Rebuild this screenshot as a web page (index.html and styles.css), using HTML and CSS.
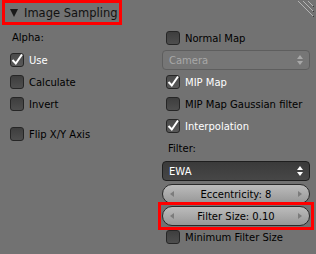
FILE: index.html
```html
<!DOCTYPE html>
<html lang="en">
<head>
	<meta charset="UTF-8">
	<meta name="viewport" content="width=device-width, initial-scale=1.0">
	<title>Image Sampling</title>
	<link rel="stylesheet" href="styles.css">
</head>
<body>
	<div class="panel">
		<div class="panel_head">
			<span class="panel_title"><span class="tri"></span>Image Sampling</span>
			<svg class="grip" width="20" height="20" viewBox="0 0 20 20">
				<path d="M4 0 L19 15 M9 0 L19 10 M14 0 L19 5" stroke="#3a3a3a" stroke-width="1" fill="none" transform="translate(1 1)"/>
				<path d="M4 0 L19 15 M9 0 L19 10 M14 0 L19 5" stroke="#b4b4b4" stroke-width="1" fill="none"/>
			</svg>
		</div>

		<div class="cols">
			<div class="col">
				<div class="label">Alpha:</div>
				<div class="opt on"><span class="box"><svg width="12" height="12" viewBox="0 0 12 12"><path d="M1.5 6 L4.8 9.5 L11 0.5" stroke="#fff" stroke-width="2" fill="none"/></svg></span>Use</div>
				<div class="opt"><span class="box"></span>Calculate</div>
				<div class="opt"><span class="box"></span>Invert</div>
				<div class="opt spaced"><span class="box"></span>Flip X/Y Axis</div>
			</div>

			<div class="col">
				<div class="opt"><span class="box"></span>Normal Map</div>
				<div class="menu off">Camera<span class="updown"></span></div>
				<div class="opt on"><span class="box"><svg width="12" height="12" viewBox="0 0 12 12"><path d="M1.5 6 L4.8 9.5 L11 0.5" stroke="#fff" stroke-width="2" fill="none"/></svg></span>MIP Map</div>
				<div class="opt"><span class="box"></span>MIP Map Gaussian filter</div>
				<div class="opt on"><span class="box"><svg width="12" height="12" viewBox="0 0 12 12"><path d="M1.5 6 L4.8 9.5 L11 0.5" stroke="#fff" stroke-width="2" fill="none"/></svg></span>Interpolation</div>
				<div class="label filter_label">Filter:</div>
				<div class="menu">EWA<span class="updown"></span></div>
				<div class="num"><span class="arr l"></span>Eccentricity: 8<span class="arr r"></span></div>
				<div class="mark">
					<div class="num"><span class="arr l"></span>Filter Size: 0.10<span class="arr r"></span></div>
				</div>
				<div class="opt"><span class="box"></span>Minimum Filter Size</div>
			</div>
		</div>
	</div>
</body>
</html>
```

FILE: styles.css
```css
body {
	margin: 0;
	background: #727272;
	font-family: "DejaVu Sans", sans-serif;
	font-size: 10px;
	color: #000;
}
.panel {
	width: 316px;
	height: 254px;
}
.panel_head {
	height: 27px;
	display: flex;
	justify-content: space-between;
	align-items: flex-start;
}
.panel_title {
	box-sizing: border-box;
	margin-left: 2px;
	width: 120px;
	height: 25px;
	border: 3px solid #f00;
	padding-left: 5px;
	display: flex;
	align-items: center;
	font-size: 11.5px;
	color: #111;
}
.tri {
	width: 0;
	height: 0;
	border-left: 4.5px solid transparent;
	border-right: 4.5px solid transparent;
	border-top: 8px solid #1a1a1a;
	margin-right: 6px;
	margin-top: 1px;
}
.grip {
	margin-top: 1px;
	margin-right: 2px;
}
.cols {
	display: flex;
	padding-left: 6px;
	gap: 4px;
}
.col {
	display: flex;
	flex-direction: column;
}
.col:first-child {
	width: 152px;
}
.col:last-child {
	width: 148px;
}
.label {
	height: 22px;
	line-height: 22px;
	padding-left: 6px;
}
.filter_label {
	height: 18px;
	line-height: 18px;
	margin-top: 3px;
	margin-bottom: 2px;
}
.opt {
	height: 22px;
	display: flex;
	align-items: center;
	padding-left: 4px;
	color: #000;
}
.opt.on {
	color: #fff;
}
.opt.spaced {
	margin-top: 8px;
}
.box {
	box-sizing: border-box;
	width: 14px;
	height: 14px;
	margin-right: 5px;
	border: 1px solid #262626;
	border-radius: 3px;
	background: linear-gradient(#3e3e3e, #4e4e4e);
	display: flex;
	align-items: center;
	justify-content: center;
}
.opt.on .box {
	background: linear-gradient(#4a4a4a, #585858);
}
.menu {
	box-sizing: border-box;
	height: 20px;
	margin: 1px 0 1px;
	padding-left: 6px;
	border: 1px solid #1e1e1e;
	border-radius: 4px;
	background: linear-gradient(#3a3a3a, #474747);
	color: #fff;
	display: flex;
	align-items: center;
	position: relative;
}
.menu.off {
	border-color: #5e5e5e;
	background: #767676;
	color: #a8a8a8;
}
.updown {
	position: absolute;
	right: 6px;
	top: 4px;
	width: 0;
	height: 0;
	border-left: 3px solid transparent;
	border-right: 3px solid transparent;
	border-bottom: 4px solid #fff;
}
.updown::after {
	content: "";
	position: absolute;
	left: -3px;
	top: 6px;
	border-left: 3px solid transparent;
	border-right: 3px solid transparent;
	border-top: 4px solid #fff;
}
.menu.off .updown {
	border-bottom-color: #a8a8a8;
}
.menu.off .updown::after {
	border-top-color: #a8a8a8;
}
.num {
	box-sizing: border-box;
	height: 20px;
	margin-top: 2px;
	border: 1px solid #2a2a2a;
	border-radius: 10px;
	background: linear-gradient(#bcbcbc, #979797);
	color: #000;
	display: flex;
	align-items: center;
	justify-content: space-between;
	padding: 0 7px;
}
.arr {
	width: 0;
	height: 0;
	border-top: 3px solid transparent;
	border-bottom: 3px solid transparent;
}
.arr.l {
	border-right: 4px solid #7c7c7c;
}
.arr.r {
	border-left: 4px solid #7c7c7c;
}
.mark {
	margin-top: 2px;
	outline: 3px solid #f00;
	outline-offset: 1px;
}
.mark .num {
	margin-top: 0;
}
```
